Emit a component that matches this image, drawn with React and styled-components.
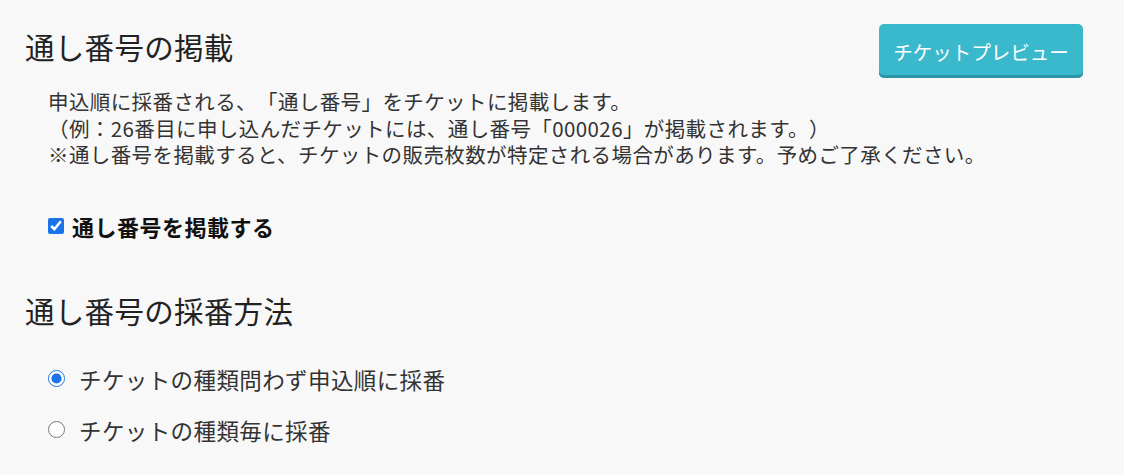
import React, { useState } from 'react'
import styled, { createGlobalStyle } from 'styled-components'

const GlobalStyle = createGlobalStyle`
  html, body {
    margin: 0;
    padding: 0;
    background: #f8f8f8;
  }
  body {
    font-family: "Noto Sans CJK JP", "Noto Sans", sans-serif;
    color: #222;
    text-spacing-trim: space-all;
  }
`

const App = () => {
  const [printSerial, setPrintSerial] = useState(true)
  const [method, setMethod] = useState('order')

  return (
    <Page>
      <GlobalStyle />
      <Section>
        <Header>
          <Title>通し番号の掲載</Title>
          <PreviewButton>チケットプレビュー</PreviewButton>
        </Header>
        <Description>
          申込順に採番される、「通し番号」をチケットに掲載します。<br />
          （例：26番目に申し込んだチケットには、通し番号「000026」が掲載されます。）<br />
          ※通し番号を掲載すると、チケットの販売枚数が特定される場合があります。予めご了承ください。
        </Description>
        <CheckLabel>
          <input
            type='checkbox'
            checked={printSerial}
            onChange={e => setPrintSerial(e.target.checked)}
          />
          通し番号を掲載する
        </CheckLabel>
      </Section>

      <Section>
        <Title>通し番号の採番方法</Title>
        <RadioList>
          <RadioLabel>
            <input
              type='radio'
              name='method'
              checked={method === 'order'}
              onChange={() => setMethod('order')}
            />
            チケットの種類問わず申込順に採番
          </RadioLabel>
          <RadioLabel>
            <input
              type='radio'
              name='method'
              checked={method === 'type'}
              onChange={() => setMethod('type')}
            />
            チケットの種類毎に採番
          </RadioLabel>
        </RadioList>
      </Section>
    </Page>
  )
}

export default App

const Page = styled.div`
  width: 1124px;
  height: 475px;
  box-sizing: border-box;
  padding: 24px 41px 0 25px;
  overflow: hidden;
`

const Section = styled.section`
  margin-bottom: 51px;
`

const Header = styled.div`
  display: flex;
  justify-content: space-between;
  align-items: flex-start;
`

const Title = styled.h2`
  margin: 4px 0 0;
  font-size: 29.5px;
  font-weight: 400;
  line-height: 36px;
  letter-spacing: 0.3px;
  color: #222;
`

const PreviewButton = styled.button`
  width: 204px;
  height: 54px;
  padding: 0;
  border: none;
  border-radius: 5px;
  background: #3bb9cc;
  box-shadow: inset 0 -3px 0 #2c97a8;
  color: #fff;
  font-family: inherit;
  font-size: 19.5px;
  cursor: pointer;
`

const Description = styled.p`
  margin: 10px 0 0 23px;
  font-size: 20.5px;
  line-height: 26.5px;
  letter-spacing: 0.4px;
  color: #333;
`

const CheckLabel = styled.label`
  display: flex;
  align-items: center;
  gap: 8px;
  margin: 43px 0 0 23px;
  font-size: 22px;
  font-weight: 700;
  line-height: 30px;
  letter-spacing: 0.5px;
  color: #111;

  & > input {
    width: 16px;
    height: 16px;
    margin: 0;
    accent-color: #1a73e8;
  }
`

const RadioList = styled.div`
  display: flex;
  flex-direction: column;
  gap: 21px;
  margin: 36px 0 0 23px;
`

const RadioLabel = styled.label`
  display: flex;
  align-items: center;
  gap: 14px;
  font-size: 22.5px;
  line-height: 30px;
  letter-spacing: 0.4px;
  color: #333;

  & > input {
    width: 17px;
    height: 17px;
    margin: 0;
    accent-color: #1a73e8;
  }
`
